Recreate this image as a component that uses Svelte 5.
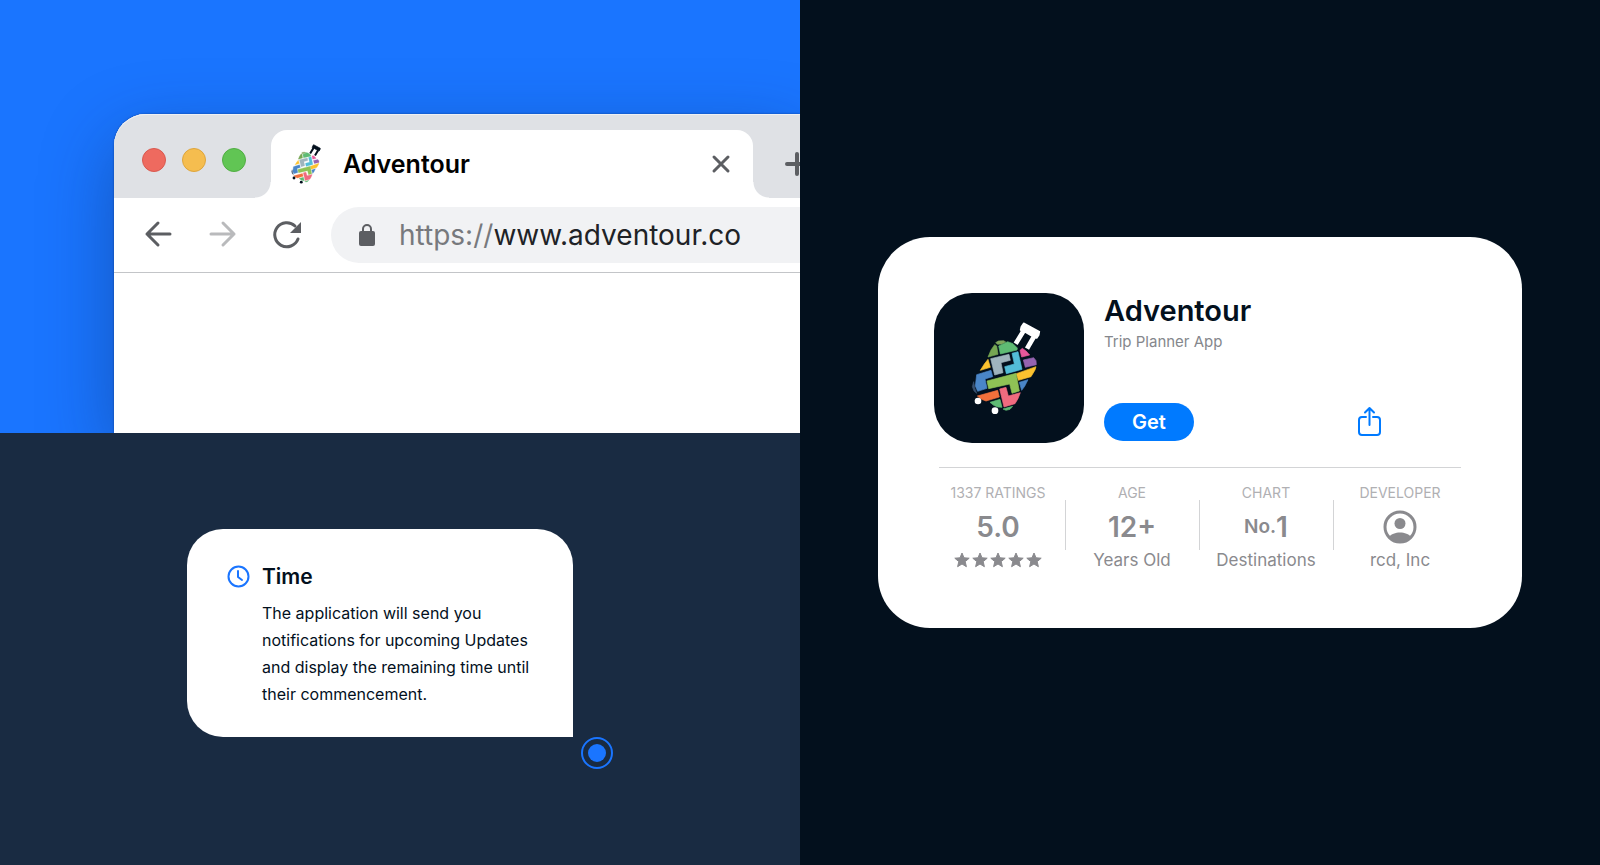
<script>
  const lights = ["red", "yellow", "green"];

  // mosaic pieces of the suitcase
  const pieces = [
    { color: "#7fa65c", points: "122,98 130,93 146,92 152,96 140,102 128,103" },
    { color: "#76a653", points: "119,104 125,108 129,133 99,141 108,120" },
    { color: "#5fbb74", points: "131,108 158,95 174,101 187,114 186,120 136,132" },
    { color: "#fcc22f", points: "99,148 106,172 76,181 88,162" },
    { color: "#9fb4bd", points: "107,146 162,133 166,151 138,158 144,188 119,195" },
    { color: "#53bdd7", points: "171,130 189,125 201,178 154,191 149,170 178,162" },
    { color: "#e8579a", points: "195,121 202,115 214,124 224,135 200,141" },
    { color: "#9563b0", points: "205,150 236,143 243,152 244,164 211,172" },
    { color: "#fcc22f", points: "184,191 243,170 240,180 228,200 190,211" },
    { color: "#4a86c8", points: "65,194 108,181 113,200 90,207 96,235 68,244 61,228" },
    { color: "#8fc255", points: "96,213 183,190 193,243 171,250 164,222 101,236" },
    { color: "#4a86c8", points: "193,217 219,209 209,229 200,241" },
    { color: "#3a5170", points: "56,215 60,236 65,250 57,243 52,230" },
    { color: "#f2703b", points: "67,258 128,241 133,261 93,273 80,268" },
    { color: "#ef6b7f", points: "134,237 153,232 160,258 196,248 189,266 180,281 147,291" },
    { color: "#5fbb74", points: "105,277 135,268 141,292 128,291 116,286" },
    { color: "#5fbb74", points: "144,297 173,289 165,298 153,301" }
  ];

  const stats = [
    { label: "1337 RATINGS", kind: "rating", value: "5.0", note: "" },
    { label: "AGE", kind: "text", value: "12+", note: "Years Old" },
    { label: "CHART", kind: "rank", value: "1", note: "Destinations" },
    { label: "DEVELOPER", kind: "person", value: "", note: "rcd, Inc" }
  ];

  let url = "www.adventour.co";
</script>

<style>
  :global(body) {
    margin: 0;
    background: #03101d;
    font-family: Inter, "Liberation Sans", sans-serif;
  }

  button {
    padding: 0;
    border: 0;
    background: none;
    font: inherit;
    cursor: pointer;
  }

  svg {
    display: block;
  }

  h1,
  h2,
  p,
  dl,
  dd {
    margin: 0;
  }

  .board {
    display: grid;
    grid-template-columns: 1fr 1fr;
    grid-template-rows: 1fr 1fr;
    min-height: 100vh;
  }

  .web {
    display: flex;
    min-width: 0;
    overflow: hidden;
    background: #1a75ff;
  }

  .message {
    display: flex;
    align-items: center;
    justify-content: center;
    background: #192b42;
  }

  .store {
    grid-column: 2;
    grid-row: 1 / 3;
    display: flex;
    align-items: center;
    justify-content: center;
    background: #03101d;
  }

  /* browser window */
  .window {
    flex: 1;
    min-width: 0;
    margin: 114px 0 0 114px;
    border-radius: 32px 0 0 0;
    background: #fff;
    box-shadow: 0 24px 72px rgba(12, 40, 90, 0.4), 0 0 2px rgba(10, 30, 80, 0.6);
  }

  .tabs {
    display: flex;
    align-items: flex-end;
    height: 84px;
    padding-left: 28px;
    border-radius: 32px 0 0 0;
    background: #dfe1e5;
    box-shadow: inset 0 1px #eff0f3;
  }

  .lights {
    display: flex;
    gap: 16px;
    margin: 0 25px 26px 0;
  }

  .light {
    box-sizing: border-box;
    width: 24px;
    height: 24px;
    border-radius: 50%;
  }

  .red {
    background: #ee6a5f;
    border: 1px solid #d9594f;
  }

  .yellow {
    background: #f5bd4f;
    border: 1px solid #dea53c;
  }

  .green {
    background: #61c554;
    border: 1px solid #51ae43;
  }

  .tab {
    position: relative;
    flex: 1;
    display: flex;
    align-items: center;
    height: 68px;
    box-sizing: border-box;
    padding: 0 22px 0 20px;
    border-radius: 16px 16px 0 0;
    background: #fff;
    color: #000;
    font-size: 25px;
    font-weight: 600;
  }

  /* flared feet of the active tab */
  .tab::before,
  .tab::after {
    content: "";
    position: absolute;
    bottom: 0;
    width: 16px;
    height: 16px;
  }

  .tab::before {
    right: 100%;
    background: radial-gradient(circle at 0 0, transparent 15px, #fff 16px);
  }

  .tab::after {
    left: 100%;
    background: radial-gradient(circle at 100% 0, transparent 15px, #fff 16px);
  }

  .favicon {
    width: 30px;
    height: 40px;
    margin-right: 22px;
  }

  .tab button {
    margin-left: auto;
  }

  .plus {
    width: 47px;
    height: 68px;
    padding-left: 32px;
    overflow: hidden;
  }

  .toolbar {
    display: flex;
    align-items: center;
    height: 74px;
    padding-left: 28px;
    border-bottom: 1px solid #c3c5c8;
  }

  .nav {
    display: flex;
    gap: 32px;
    margin-right: 29px;
  }

  .address {
    flex: 1;
    min-width: 0;
    display: flex;
    align-items: center;
    height: 56px;
    border-radius: 28px 0 0 28px;
    background: #f1f2f4;
    color: #77797d;
    font-size: 28px;
  }

  .address svg {
    margin: 0 24px 0 28px;
  }

  .address input {
    flex: 1;
    min-width: 0;
    padding: 0;
    border: 0;
    outline: 0;
    background: none;
    color: #202226;
    font: inherit;
  }

  /* chat bubble */
  .thread {
    display: flex;
    flex-direction: column;
    width: 426px;
  }

  .bubble {
    box-sizing: border-box;
    width: 386px;
    padding: 33px 40px 29px;
    border-radius: 36px 36px 0 36px;
    background: #fff;
    color: #03101d;
  }

  .heading {
    display: flex;
    align-items: center;
    gap: 12px;
    margin-bottom: 8px;
  }

  .heading h2 {
    font-size: 21px;
    line-height: 30px;
    font-weight: 600;
  }

  .bubble p {
    padding-left: 35px;
    font-size: 16px;
    line-height: 27px;
    white-space: nowrap;
  }

  .thread > svg {
    align-self: flex-end;
  }

  /* store listing */
  .card {
    box-sizing: border-box;
    width: 644px;
    padding: 56px 56px 58px;
    border-radius: 52px;
    background: #fff;
  }

  .app {
    display: flex;
    gap: 20px;
    margin-bottom: 24px;
  }

  .tile {
    width: 150px;
    height: 150px;
    border-radius: 38px;
    background: #03101d;
  }

  .info {
    flex: 1;
    display: flex;
    flex-direction: column;
  }

  .info h1 {
    color: #03101d;
    font-size: 29px;
    line-height: 36px;
    font-weight: 600;
  }

  .info p {
    color: #85878c;
    font-size: 15px;
    line-height: 26px;
  }

  .actions {
    display: flex;
    align-items: center;
    justify-content: space-between;
    margin-top: auto;
    padding: 0 82px 2px 0;
  }

  .actions .get {
    width: 90px;
    height: 38px;
    border-radius: 19px;
    background: #007aff;
    color: #fff;
    font-size: 20px;
    font-weight: 600;
  }

  .stats {
    display: grid;
    grid-template-columns: repeat(4, 1fr);
    margin: 0 -1px 0 -3px;
  }

  .rule {
    height: 1px;
    margin: 0 5px 14px;
    border: 0;
    background: #d3d4d6;
  }

  .stat {
    position: relative;
    display: flex;
    flex-direction: column;
    align-items: center;
    color: #8a8a8e;
  }

  .stat + .stat::before {
    content: "";
    position: absolute;
    left: 0;
    top: 18px;
    width: 1px;
    height: 50px;
    background: #d3d4d6;
  }

  .stat dt {
    color: #b0b0b3;
    font-size: 14px;
    line-height: 22px;
  }

  .value {
    display: flex;
    align-items: center;
    height: 45px;
    font-size: 28px;
    font-weight: 600;
  }

  .value small {
    font-size: 19px;
  }

  .note {
    display: flex;
    align-items: center;
    height: 21px;
    font-size: 17px;
  }
</style>

{#snippet suitcase(ink)}
  {#each pieces as piece}
    <polygon points={piece.points} fill={piece.color} stroke={piece.color} stroke-width="2" />
  {/each}
  <path d="M206 62 182 101M238 78 216 116" stroke={ink} stroke-width="14" />
  <polygon
    points="206,40 253,65 251,75 245,84 236,81 230,77 211,66 203,66 197,60 199,51"
    fill={ink}
    stroke={ink}
    stroke-width="5"
    stroke-linejoin="round" />
  <circle cx="69" cy="273" r="10" fill={ink} />
  <circle cx="120" cy="302" r="10" fill={ink} />
{/snippet}

<main class="board">
  <section class="web">
    <div class="window">
      <div class="tabs">
        <div class="lights">
          {#each lights as light}
            <button class="light {light}" aria-label={light}></button>
          {/each}
        </div>
        <div class="tab">
          <svg class="favicon" viewBox="50 35 206 280">{@render suitcase("#03101d")}</svg>
          <span>Adventour</span>
          <button aria-label="Close tab">
            <svg width="20" height="20" viewBox="0 0 20 20">
              <path d="M3 3 17 17M17 3 3 17" stroke="#5c5e62" stroke-width="3" stroke-linecap="round" />
            </svg>
          </button>
        </div>
        <button class="plus" aria-label="New tab">
          <svg width="24" height="24" viewBox="0 0 24 24">
            <path d="M12 2V22M2 12H22" stroke="#5c5e62" stroke-width="4" stroke-linecap="round" />
          </svg>
        </button>
      </div>
      <div class="toolbar">
        <div class="nav">
          <button aria-label="Back">
            <svg width="32" height="32" viewBox="0 0 32 32" fill="none" stroke="#5c5e62" stroke-width="3" stroke-linecap="round" stroke-linejoin="round">
              <path d="M28 15H5M16 4 5 15 16 26" />
            </svg>
          </button>
          <button aria-label="Forward">
            <svg width="32" height="32" viewBox="0 0 32 32" fill="none" stroke="#b9babc" stroke-width="3" stroke-linecap="round" stroke-linejoin="round">
              <path d="M5 15H28M17 4 28 15 17 26" />
            </svg>
          </button>
          <button aria-label="Reload">
            <svg width="32" height="32" viewBox="0 0 32 32">
              <path d="M28 20A12 12 0 1 1 25 7" fill="none" stroke="#5c5e62" stroke-width="3" stroke-linecap="round" />
              <path d="M31 3V14H20Z" fill="#5c5e62" />
            </svg>
          </button>
        </div>
        <label class="address">
          <svg width="16" height="22" viewBox="0 0 16 22">
            <rect y="7" width="16" height="15" rx="2" fill="#5c5e62" />
            <path d="M4 8V5a4 4 0 0 1 8 0V8" fill="none" stroke="#5c5e62" stroke-width="2" />
          </svg>
          <span>https://</span>
          <input type="text" aria-label="Address" bind:value={url} />
        </label>
      </div>
    </div>
  </section>

  <section class="message">
    <div class="thread">
      <div class="bubble">
        <div class="heading">
          <svg width="23" height="23" viewBox="0 0 23 23" fill="none" stroke="#1a75ff" stroke-width="2" stroke-linecap="round" stroke-linejoin="round">
            <circle cx="11.5" cy="11.5" r="10" />
            <path d="M11 6V12L15 15" />
          </svg>
          <h2>Time</h2>
        </div>
        <p>
          The application will send you<br />
          notifications for upcoming Updates<br />
          and display the remaining time until<br />
          their commencement.
        </p>
      </div>
      <svg width="32" height="32" viewBox="0 0 32 32">
        <circle cx="16" cy="16" r="15" fill="none" stroke="#1a75ff" stroke-width="2" />
        <circle cx="16" cy="16" r="9" fill="#1a75ff" />
      </svg>
    </div>
  </section>

  <section class="store">
    <article class="card">
      <div class="app">
        <svg class="tile" viewBox="-63 -51 450 450">{@render suitcase("#fff")}</svg>
        <div class="info">
          <h1>Adventour</h1>
          <p>Trip Planner App</p>
          <div class="actions">
            <button class="get">Get</button>
            <button aria-label="Share">
              <svg width="28" height="32" viewBox="0 0 28 32" fill="none" stroke="#007aff" stroke-width="2" stroke-linecap="round" stroke-linejoin="round">
                <path d="M10 11H6a3 3 0 0 0-3 3V26a3 3 0 0 0 3 3H21a3 3 0 0 0 3-3V14a3 3 0 0 0-3-3H17" />
                <path d="M13.5 19V2M9 6.5 13.5 2 18 6.5" />
              </svg>
            </button>
          </div>
        </div>
      </div>
      <hr class="rule" />
      <dl class="stats">
        {#each stats as stat}
          <div class="stat">
            <dt>{stat.label}</dt>
            <dd class="value">
              {#if stat.kind === "rank"}
                <small>No.</small>{stat.value}
              {:else if stat.kind === "person"}
                <svg width="34" height="34" viewBox="0 0 34 34">
                  <circle cx="17" cy="17" r="15" fill="none" stroke="#8a8a8e" stroke-width="3" />
                  <circle cx="17" cy="13.5" r="5.5" fill="#8a8a8e" />
                  <path d="M6 27C10 21 24 21 28 27A15 15 0 0 1 6 27Z" fill="#8a8a8e" />
                </svg>
              {:else}
                {stat.value}
              {/if}
            </dd>
            <dd class="note">
              {#if stat.kind === "rating"}
                <svg width="90" height="16" viewBox="0 0 90 16" fill="#8a8a8e" stroke="#8a8a8e" stroke-linejoin="round">
                  {#each [9, 27, 45, 63, 81] as x}
                    <path d="M{x} 1l2 4.8 5.2.4-4 3.4 1.2 5.1-4.4-2.7-4.4 2.7 1.2-5.1-4-3.4 5.2-.4z" />
                  {/each}
                </svg>
              {:else}
                {stat.note}
              {/if}
            </dd>
          </div>
        {/each}
      </dl>
    </article>
  </section>
</main>
